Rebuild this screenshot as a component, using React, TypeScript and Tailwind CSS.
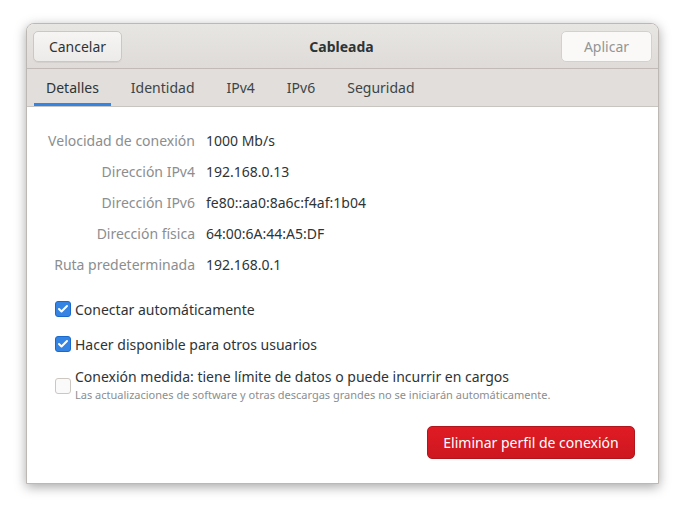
import { Check } from "lucide-react";

const detalles = [
  ["Velocidad de conexión", "1000 Mb/s"],
  ["Dirección IPv4", "192.168.0.13"],
  ["Dirección IPv6", "fe80::aa0:8a6c:f4af:1b04"],
  ["Dirección física", "64:00:6A:44:A5:DF"],
  ["Ruta predeterminada", "192.168.0.1"],
];

const tabs = ["Detalles", "Identidad", "IPv4", "IPv6", "Seguridad"];

const Checkbox = ({ checked }: { checked: boolean }) =>
  checked ? (
    <span className="flex w-4 h-4 shrink-0 items-center justify-center rounded-[3px] bg-[#3584e4] border border-[#1b6acb]">
      <Check className="w-3 h-3 text-white" strokeWidth={4} />
    </span>
  ) : (
    <span className="block w-4 h-4 shrink-0 rounded-[3px] bg-[#fafafa] border border-[#cdc7c2]" />
  );

export default function App() {
  return (
    <div className="w-[685px] h-[513px] bg-white pt-[23px] pl-[26px] font-['Noto_Sans',sans-serif] text-[14px] text-[#2e3436]">
      <div className="w-[633px] h-[461px] flex flex-col rounded-t-[8px] border border-[#bdb8b3] bg-white shadow-[0_3px_12px_rgba(0,0,0,0.35)] overflow-hidden">
        <div className="h-[45px] flex items-center justify-between px-[6px] bg-gradient-to-b from-[#e8e6e3] to-[#dedbd8] border-b border-[#c0bbb6]">
          <button className="w-[89px] h-[31px] rounded-[5px] border border-[#cdc7c2] bg-gradient-to-b from-[#f6f5f4] to-[#edebe9] text-[#2e3436] shadow-[0_1px_0_rgba(0,0,0,0.05)]">
            Cancelar
          </button>
          <span className="font-bold">Cableada</span>
          <button className="w-[91px] h-[31px] rounded-[5px] border border-[#d5d0cc] bg-[#faf9f8] text-[#929595]">
            Aplicar
          </button>
        </div>
        <div className="h-[38px] flex items-stretch gap-2 pl-[7px] bg-[#e1dedb] border-b border-[#c8c4bf]">
          {tabs.map((t, i) => (
            <div
              key={t}
              className={`flex items-center px-3 pt-[3px] border-b-[3px] ${
                i === 0 ? "border-[#3584e4] text-[#2e3436]" : "border-transparent text-[#3d4446]"
              }`}
            >
              {t}
            </div>
          ))}
        </div>
        <div className="flex-1 flex flex-col bg-white pt-[18px]">
          {detalles.map(([k, v]) => (
            <div key={k} className="h-[31px] flex items-center">
              <span className="w-[168px] text-right text-[#8b8e8f]">{k}</span>
              <span className="ml-[11px] text-[#2e3436]">{v}</span>
            </div>
          ))}
          <div className="mt-[20px] pl-[28px] flex flex-col">
            <label className="h-[18px] flex items-center gap-[4px]">
              <Checkbox checked />
              Conectar automáticamente
            </label>
            <label className="mt-[17px] h-[18px] flex items-center gap-[4px]">
              <Checkbox checked />
              Hacer disponible para otros usuarios
            </label>
            <label className="mt-[15px] flex items-center gap-[4px]">
              <Checkbox checked={false} />
              <span className="flex flex-col">
                <span className="leading-[18px]">Conexión medida: tiene límite de datos o puede incurrir en cargos</span>
                <span className="text-[11px] leading-[17px] text-[#8b8e8f]">
                  Las actualizaciones de software y otras descargas grandes no se iniciarán automáticamente.
                </span>
              </span>
            </label>
          </div>
          <div className="flex justify-end pr-[23px] mt-[23px]">
            <button className="w-[208px] h-[33px] rounded-[5px] border border-[#b2161d] bg-gradient-to-b from-[#e01b24] to-[#cd1720] text-white">
              Eliminar perfil de conexión
            </button>
          </div>
        </div>
      </div>
    </div>
  );
}
